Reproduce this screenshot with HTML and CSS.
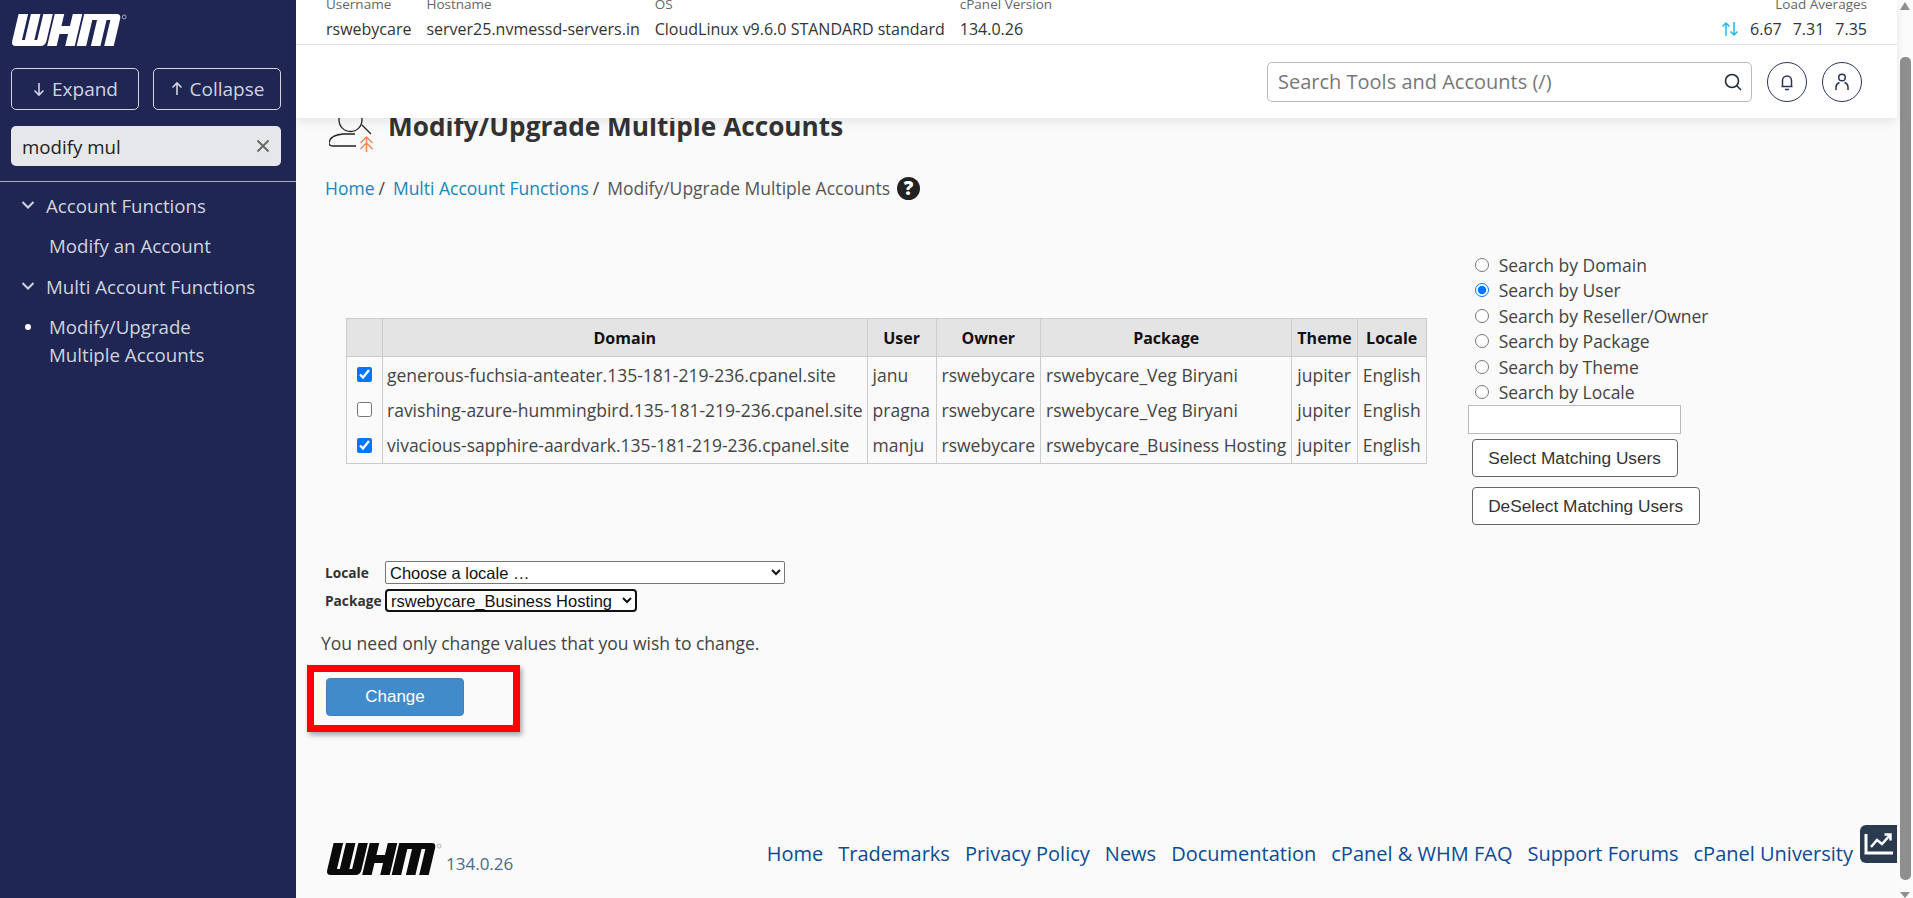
FILE: index.html
```html
<!DOCTYPE html>
<html lang="en">
<head>
    <meta charset="UTF-8">
    <meta name="viewport" content="width=device-width, initial-scale=1.0">
    <title>Modify/Upgrade Multiple Accounts</title>
    <link rel="stylesheet" href="styles.css">
</head>
<body>
    <aside class="sidebar">
        <svg class="whm-logo" viewBox="0 0 122 33" preserveAspectRatio="none" aria-label="WHM">
            <g transform="translate(8,0) skewX(-14)">
                <path d="M0 0H10V26H13V0H23V26H26V0H36V27Q36 32 31 32H5Q0 32 0 27Z"/>
                <path d="M38 0H48V12H57V0H67V32H57V20H48V32H38Z"/>
                <path d="M69 0H103Q108 0 108 5V32H98V6H94V32H84V6H79V32H69Z"/>
            </g>
            <circle cx="119" cy="3" r="2" fill="none" stroke="currentColor" stroke-width="0.6"/>
        </svg>
        <div class="side-buttons">
            <button class="side-button expand">
                <svg viewBox="0 0 14 16"><path d="M7 2V14M2.5 9.5L7 14L11.500 9.5"/></svg>
                Expand
            </button>
            <button class="side-button collapse">
                <svg viewBox="0 0 14 16"><path d="M7 14V2M2.500 6.500L7 2L11.500 6.500"/></svg>
                Collapse
            </button>
        </div>
        <div class="side-search">
            <input type="text" value="modify mul">
            <svg viewBox="0 0 14 14"><path d="M1.500 1.500L12.500 12.500M12.500 1.500L1.500 12.500"/></svg>
        </div>
        <nav class="side-nav">
            <div class="nav-group">
                <svg viewBox="0 0 14 10"><path d="M1.500 2L7 7.500L12.500 2"/></svg>
                Account Functions
            </div>
            <div class="nav-item">Modify an Account</div>
            <div class="nav-group">
                <svg viewBox="0 0 14 10"><path d="M1.500 2L7 7.500L12.500 2"/></svg>
                Multi Account Functions
            </div>
            <div class="nav-item current">Modify/Upgrade<br>Multiple Accounts</div>
        </nav>
    </aside>

    <div class="main">
        <header class="topbar">
            <div class="server-info">
                <div class="info-col"><span class="info-label">Username</span><span>rswebycare</span></div>
                <div class="info-col"><span class="info-label">Hostname</span><span>server25.nvmessd-servers.in</span></div>
                <div class="info-col"><span class="info-label">OS</span><span>CloudLinux v9.6.0 STANDARD standard</span></div>
                <div class="info-col"><span class="info-label">cPanel Version</span><span>134.0.26</span></div>
                <div class="info-col load">
                    <span class="info-label">Load Averages</span>
                    <span class="load-values">
                        <svg viewBox="0 0 18 16"><path d="M5 15V2M1.500 5.500L5 2L8.500 5.500M13 1V14M9.500 10.500L13 14L16.500 10.500"/></svg>
                        <span>6.67</span><span>7.31</span><span>7.35</span>
                    </span>
                </div>
            </div>
            <div class="tool-row">
                <div class="tool-search">
                    <input type="text" placeholder="Search Tools and Accounts (/)">
                    <svg viewBox="0 0 20 20"><circle cx="9" cy="9" r="6.500"/><path d="M13.800 13.800L18 18"/></svg>
                </div>
                <button class="circle-button">
                    <svg viewBox="0 0 20 20"><path d="M4.500 14.500H15.500M5.500 14.500V8.500A4.500 4.500 0 0 1 14.500 8.500V14.500M8 17.500H12"/></svg>
                </button>
                <button class="circle-button">
                    <svg viewBox="0 0 20 20"><circle cx="10" cy="5.500" r="3.300"/><path d="M4 18V15A5 5 0 0 1 7.500 10.500M16 18V15A5 5 0 0 0 12.500 10.500"/></svg>
                </button>
            </div>
        </header>

        <main class="content">
            <div class="title-row">
                <svg class="title-icon" viewBox="0 0 44 52">
                    <circle cx="21.500" cy="20" r="11.500" fill="none" stroke="#222" stroke-width="1.300"/>
                    <path d="M33 25Q38 30 42 34M27 46H4Q0 46 0 43Q1 35 14 34H26" fill="none" stroke="#222" stroke-width="1.300"/>
                    <path d="M37.500 52V37M31.500 43L37.500 37L43.500 43M31.500 49L37.500 43L43.500 49" fill="none" stroke="#ea8a5e" stroke-width="1.500"/>
                </svg>
                <h1>Modify/Upgrade Multiple Accounts</h1>
            </div>
            <div class="breadcrumb">
                <a href="#">Home</a><span class="sep">/</span>
                <a href="#">Multi Account Functions</a><span class="sep">/</span>
                <span>Modify/Upgrade Multiple Accounts</span>
                <span class="help-icon">?</span>
            </div>

            <div class="accounts">
                <table class="account-table">
                    <thead>
                        <tr>
                            <th class="check-col"></th>
                            <th>Domain</th>
                            <th class="user-col">User</th>
                            <th>Owner</th>
                            <th>Package</th>
                            <th>Theme</th>
                            <th>Locale</th>
                        </tr>
                    </thead>
                    <tbody>
                        <tr>
                            <td class="check-col"><input type="checkbox" checked></td>
                            <td class="domain">generous-fuchsia-anteater.135-181-219-236.cpanel.site</td>
                            <td>janu</td>
                            <td>rswebycare</td>
                            <td>rswebycare_Veg Biryani</td>
                            <td>jupiter</td>
                            <td>English</td>
                        </tr>
                        <tr>
                            <td class="check-col"><input type="checkbox"></td>
                            <td class="domain">ravishing-azure-hummingbird.135-181-219-236.cpanel.site</td>
                            <td>pragna</td>
                            <td>rswebycare</td>
                            <td>rswebycare_Veg Biryani</td>
                            <td>jupiter</td>
                            <td>English</td>
                        </tr>
                        <tr>
                            <td class="check-col"><input type="checkbox" checked></td>
                            <td class="domain">vivacious-sapphire-aardvark.135-181-219-236.cpanel.site</td>
                            <td>manju</td>
                            <td>rswebycare</td>
                            <td>rswebycare_Business Hosting</td>
                            <td>jupiter</td>
                            <td>English</td>
                        </tr>
                    </tbody>
                </table>

                <div class="search-panel">
                    <label class="radio-row"><input type="radio" name="by">Search by Domain</label>
                    <label class="radio-row"><input type="radio" name="by" checked>Search by User</label>
                    <label class="radio-row"><input type="radio" name="by">Search by Reseller/Owner</label>
                    <label class="radio-row"><input type="radio" name="by">Search by Package</label>
                    <label class="radio-row"><input type="radio" name="by">Search by Theme</label>
                    <label class="radio-row"><input type="radio" name="by">Search by Locale</label>
                    <input class="match-input" type="text">
                    <button class="match-button">Select Matching Users</button>
                    <button class="match-button">DeSelect Matching Users</button>
                </div>
            </div>

            <div class="change-form">
                <label class="field-label">Locale</label>
                <select class="locale-select"><option>Choose a locale …</option></select>
                <label class="field-label">Package</label>
                <select class="package-select"><option>rswebycare_Business Hosting</option></select>
            </div>
            <p class="note">You need only change values that you wish to change.</p>
            <div class="highlight-box">
                <button class="change-button">Change</button>
            </div>

            <footer class="page-footer">
                <div class="footer-brand">
                    <svg class="whm-logo dark" viewBox="0 0 122 33" preserveAspectRatio="none" aria-label="WHM">
                        <g transform="translate(8,0) skewX(-14)">
                            <path d="M0 0H10V26H13V0H23V26H26V0H36V27Q36 32 31 32H5Q0 32 0 27Z"/>
                            <path d="M38 0H48V12H57V0H67V32H57V20H48V32H38Z"/>
                            <path d="M69 0H103Q108 0 108 5V32H98V6H94V32H84V6H79V32H69Z"/>
                        </g>
                        <circle cx="119" cy="3" r="2" fill="none" stroke="#888" stroke-width="0.6"/>
                    </svg>
                    <span class="footer-version">134.0.26</span>
                </div>
                <div class="footer-links">
                    <a href="#">Home</a>
                    <a href="#">Trademarks</a>
                    <a href="#">Privacy Policy</a>
                    <a href="#">News</a>
                    <a href="#">Documentation</a>
                    <a href="#">cPanel &amp; WHM FAQ</a>
                    <a href="#">Support Forums</a>
                    <a href="#">cPanel University</a>
                </div>
            </footer>
            <button class="stats-button">
                <svg viewBox="0 0 37 38"><path class="axis" d="M6 9V28H33"/><path d="M11 22L17 15L22 19L30 10M24.500 9.500H30.500V15.500"/></svg>
            </button>
        </main>
    </div>

    <div class="scrollbar">
        <span class="arrow-up"></span>
        <span class="thumb"></span>
        <span class="arrow-down"></span>
    </div>
</body>
</html>
```

FILE: styles.css
```css
* {
    box-sizing: border-box;
}
html, body {
    height: 100%;
}
body {
    margin: 0;
    display: flex;
    height: 898px;
    overflow: hidden;
    font-family: "Open Sans", sans-serif;
    font-size: 17.500px;
    color: #444;
    background-color: #fafafa;
}

/* sidebar */
.sidebar {
    width: 296px;
    flex: none;
    background-color: #1f2654;
    color: #d0d4df;
    font-size: 18.700px;
}
.whm-logo {
    display: block;
    width: 116px;
    height: 33px;
    margin: 14px 0 0 11px;
    fill: #fff;
    color: #fff;
}
.side-buttons {
    display: flex;
    justify-content: space-between;
    margin: 21px 15px 0 11px;
}
.side-button {
    width: 128px;
    height: 42px;
    display: flex;
    align-items: center;
    justify-content: center;
    gap: 6px;
    background: none;
    border: 1px solid #d0d4df;
    border-radius: 5px;
    color: #d0d4df;
    font: 19px "Open Sans", sans-serif;
}
.side-button svg {
    width: 14px;
    height: 16px;
    fill: none;
    stroke: currentColor;
    stroke-width: 1.600;
}
.side-search {
    position: relative;
    margin: 16px 15px 0 11px;
}
.side-search input {
    width: 100%;
    height: 40px;
    border: none;
    border-radius: 5px;
    padding: 0 40px 0 11px;
    background-color: #e6e7ea;
    color: #222;
    font: 18.700px "Open Sans", sans-serif;
}
.side-search svg {
    position: absolute;
    right: 11px;
    top: 13px;
    width: 14px;
    height: 14px;
    fill: none;
    stroke: #666;
    stroke-width: 1.800;
}
.side-nav {
    margin-top: 15px;
    border-top: 1px solid #a9aec4;
    padding-top: 3px;
}
.nav-group {
    display: flex;
    align-items: center;
    gap: 11px;
    height: 40px;
    padding-left: 21px;
}
.nav-group svg {
    width: 14px;
    height: 10px;
    fill: none;
    stroke: currentColor;
    stroke-width: 2;
}
.nav-item {
    position: relative;
    padding-left: 49px;
    line-height: 28px;
    margin: 7px 0 6px;
}
.nav-item.current::before {
    content: "";
    position: absolute;
    left: 25px;
    top: 11px;
    width: 6px;
    height: 6px;
    border-radius: 50%;
    background-color: #fff;
}

/* top bars */
.main {
    flex: 1;
    min-width: 0;
    display: flex;
    flex-direction: column;
    position: relative;
}
.topbar {
    position: relative;
    z-index: 2;
    background-color: #fff;
    box-shadow: 0 4px 10px rgba(0, 0, 0, 0.08);
}
.server-info {
    display: flex;
    gap: 15px;
    height: 45px;
    padding: 0 30px;
    overflow: hidden;
    border-bottom: 1px solid #e2e2e2;
    font-size: 16px;
    color: #333;
}
.info-col {
    display: flex;
    flex-direction: column;
    margin-top: -8px;
    line-height: 24px;
}
.info-col > span:last-child {
    margin-top: 1px;
}
.info-label {
    font-size: 13.500px;
    color: #666;
}
.load {
    margin-left: auto;
    align-items: flex-end;
}
.load-values {
    display: flex;
    align-items: center;
    gap: 11px;
}
.load-values svg {
    width: 18px;
    height: 16px;
    fill: none;
    stroke: #29b6dc;
    stroke-width: 1.500;
}
.tool-row {
    display: flex;
    justify-content: flex-end;
    align-items: center;
    gap: 15px;
    height: 73px;
    padding-right: 35px;
}
.tool-search {
    position: relative;
    width: 485px;
}
.tool-search input {
    width: 100%;
    height: 40px;
    border: 1px solid #bbb;
    border-radius: 5px;
    padding: 0 40px 0 10px;
    font: 20px "Open Sans", sans-serif;
    color: #333;
}
.tool-search input::placeholder {
    color: #777;
}
.tool-search svg {
    position: absolute;
    right: 9px;
    top: 10px;
    width: 20px;
    height: 20px;
    fill: none;
    stroke: #1d2b3a;
    stroke-width: 1.600;
}
.circle-button {
    width: 40px;
    height: 40px;
    padding: 0;
    display: flex;
    align-items: center;
    justify-content: center;
    background: #fff;
    border: 1px solid #2b3358;
    border-radius: 50%;
}
.circle-button svg {
    width: 20px;
    height: 20px;
    fill: none;
    stroke: #2b3358;
    stroke-width: 1.500;
}

/* page content */
.content {
    position: relative;
    flex: 1;
    padding-left: 30px;
}
.title-row {
    display: flex;
    gap: 15px;
    height: 52px;
    margin-top: -18px;
    margin-left: 3px;
}
.title-icon {
    width: 44px;
    height: 52px;
    flex: none;
}
h1 {
    margin: 8px 0 0;
    font-size: 26.200px;
    line-height: 36px;
    font-weight: 700;
    color: #333;
}
.breadcrumb {
    display: flex;
    align-items: center;
    margin-top: 24px;
    margin-left: -1px;
    line-height: 24px;
    color: #555;
}
.breadcrumb a {
    color: #1b84bb;
    text-decoration: none;
}
.sep {
    margin: 0 8px 0 4px;
    color: #444;
}
.help-icon {
    width: 23px;
    height: 23px;
    margin-left: 7px;
    border-radius: 50%;
    background-color: #222;
    color: #fff;
    font-size: 19px;
    font-weight: 800;
    line-height: 23px;
    text-align: center;
}
.accounts {
    display: flex;
    align-items: flex-start;
    margin-top: 52px;
}
.account-table {
    margin: 66px 0 0 20px;
    border-collapse: collapse;
    border: 1px solid #ccc;
}
.account-table th {
    height: 38px;
    padding: 0 5px;
    background-color: #e4e4e4;
    border: 1px solid #ccc;
    color: #111;
    font-size: 16px;
    font-weight: 700;
}
.account-table td {
    height: 35.500px;
    padding: 0 5px;
    border-left: 1px solid #ccc;
    border-right: 1px solid #ccc;
    white-space: nowrap;
}
.account-table td.domain {
    padding: 0 4px;
}
.account-table th.user-col {
    width: 69px;
}
.check-col {
    width: 36px;
    text-align: center;
}
.check-col input {
    display: block;
    width: 15px;
    height: 15px;
    margin: 0 auto;
}
.search-panel {
    display: flex;
    flex-direction: column;
    align-items: flex-start;
    margin-left: 41px;
}
.radio-row {
    display: flex;
    align-items: center;
    height: 25.500px;
    padding-left: 7px;
}
.radio-row input {
    width: 14px;
    height: 14px;
    margin: 0 10px 0 0;
}
.match-input {
    width: 213px;
    height: 29px;
    border: 1px solid #bbb;
    background-color: #fff;
}
.match-button {
    height: 38px;
    margin: 5px 0 5px 4px;
    padding: 0 15.500px;
    background-color: #fff;
    border: 1px solid #666;
    border-radius: 4px;
    color: #333;
    font: 17.300px "Liberation Sans", Arial, sans-serif;
}
.change-form {
    display: grid;
    grid-template-columns: 60px max-content;
    align-items: center;
    row-gap: 5px;
    margin-top: 31px;
    margin-left: -1px;
}
.field-label {
    font-size: 13.700px;
    font-weight: 700;
    color: #333;
}
.locale-select {
    width: 400px;
    height: 23px;
    font: 16.500px "Liberation Sans", Arial, sans-serif;
    color: #111;
    background-color: #fff;
    border: 1px solid #767676;
    border-radius: 2px;
}
.package-select {
    width: 252px;
    height: 23px;
    padding: 0;
    font: 16.500px "Liberation Sans", Arial, sans-serif;
    color: #111;
    background-color: #fff;
    border: 2px solid #111;
    border-radius: 4px;
}
.note {
    margin: 19px 0 0 -5px;
    line-height: 24px;
}
.highlight-box {
    width: 213px;
    height: 67px;
    margin: 10px 0 0 -19px;
    padding: 6px 0 0 12px;
    border: 7px solid #f00;
    box-shadow: 2px 3px 5px rgba(0, 0, 0, 0.35);
}
.change-button {
    display: block;
    width: 138px;
    height: 38px;
    background-color: #428bca;
    border: 1px solid #3d80ba;
    border-radius: 4px;
    color: #fff;
    font: 17px "Liberation Sans", Arial, sans-serif;
}
.page-footer {
    display: flex;
    justify-content: space-between;
    align-items: flex-start;
    margin-top: 111px;
    padding-right: 44px;
}
.footer-brand {
    display: flex;
    align-items: flex-end;
    gap: 4px;
}
.whm-logo.dark {
    margin: 0;
    fill: #0a0a0a;
    color: #0a0a0a;
}
.footer-version {
    color: #4d6a88;
    font-size: 17px;
    line-height: 24px;
}
.footer-links {
    display: flex;
    gap: 15px;
    margin-top: -3px;
    font-size: 20px;
}
.footer-links a {
    color: #0d4a94;
    text-decoration: none;
}
.stats-button {
    position: absolute;
    right: 0;
    top: 707px;
    width: 37px;
    height: 38px;
    padding: 0;
    background-color: #2a3b4f;
    border: none;
    border-radius: 6px 0 0 6px;
}
.stats-button svg {
    display: block;
    width: 37px;
    height: 38px;
    fill: none;
    stroke: #fff;
    stroke-width: 2.500;
}
.stats-button .axis {
    stroke-width: 3;
}

/* fake scrollbar */
.scrollbar {
    width: 16px;
    flex: none;
    position: relative;
    background-color: #fbfbfb;
}
.arrow-up, .arrow-down {
    position: absolute;
    left: 3px;
    width: 0;
    height: 0;
    border-left: 5px solid transparent;
    border-right: 5px solid transparent;
}
.arrow-up {
    top: 2px;
    border-bottom: 8px solid #8f8f8f;
}
.arrow-down {
    bottom: 0;
    border-top: 6px solid #8f8f8f;
}
.thumb {
    position: absolute;
    left: 3px;
    top: 57px;
    width: 11px;
    height: 823px;
    border-radius: 5px;
    background-color: #8f8f8f;
}
```
